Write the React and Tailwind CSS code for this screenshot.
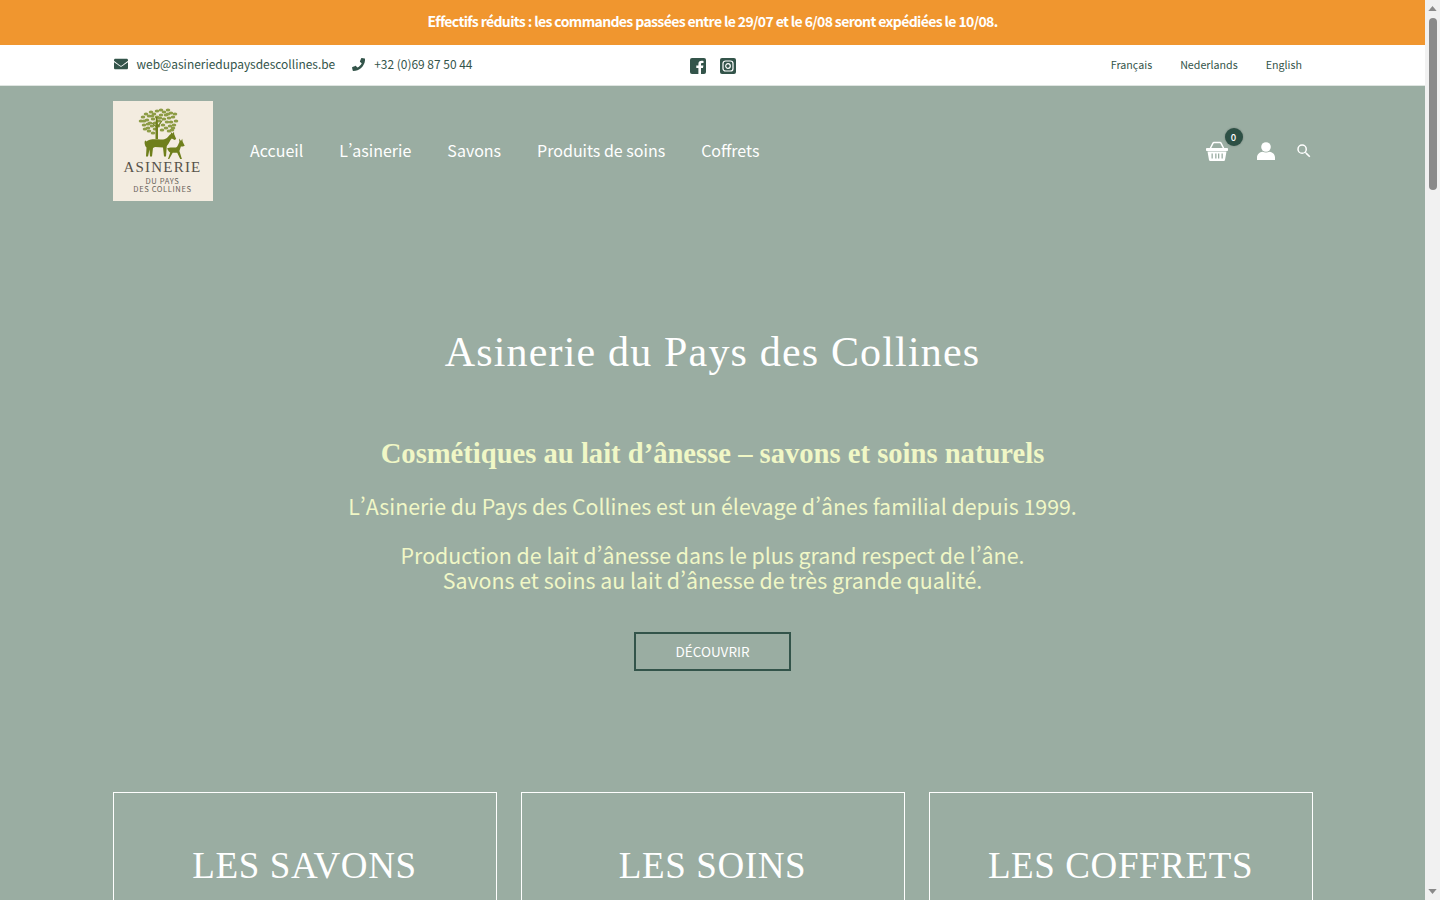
const sans = { fontFamily: '"Noto Sans CJK SC", "Noto Sans", sans-serif' };

const leaves = [
  [30,20],[32,16],[33,24],[35,13],[36,19],[37,27],[38,15],[39,22],[40,11],[41,25],[42,18],[43,13],[44,28],[44,22],[46,10],[46,16],[47,25],[48,20],
  [50,9],[50,14],[52,24],[53,11],[53,18],[55,27],[55,14],[56,21],[57,9],[58,17],[59,25],[60,12],[60,21],[61,29],[62,16],[63,24],[64,13],[65,20],[34,28],[38,30],[42,32],[58,30],[51,29],[33,20],[41,15],[49,17],[57,13],[62,27],[37,23]
];

function Logo() {
  return (
    <div className="w-[100px] h-[100px] bg-[#f3ece0] flex flex-col items-center shrink-0">
      <svg viewBox="0 0 100 60" className="w-[100px] h-[60px] block">
        <g fill="#8d9c45">
          {leaves.map(([x, y]) => (
            <ellipse key={`${x}-${y}`} cx={x - 2} cy={y} rx="2.300" ry="1.600" />
          ))}
        </g>
        <g fill="#6f7f1c">
          <path d="M43 16h1.500l.5 8 4-5 .7.6-4.700 7V38h-2.500V26l-4-4 .6-.6 3.400 3z" />
          <path d="M33.500 40.500c2-2.500 8-2.500 14-2 5 .4 7-1.800 9.500-5l1-.5-.2-2 1.800 1.600 1.400-1.800.2 2.400 2 4.800-1.600 1-2.800-1.500c-2 1.700-2.500 5-5 7.500l-.8 10.500h-2l-1-9-8-.5-2 1-1 8.500h-2l-.5-7-1.500 7h-2l.5-9c-2-2-2.500-6.500-1-7z" />
          <path d="M54 47.500c2-1.500 6-1 9-1 1.500-.6 2.500-3.500 3.400-5.500l-.4-3.500 2 2.500 1.200-2.300.5 3 2 4-1.800.7-2 .2-1.500 4.500 2.500 8h-1.700l-3-6.300-4.500 0-3.500 6.300H55l2.200-6.500c-1.500-1-2.700-3-3.200-4.600z" />
        </g>
      </svg>
      <div className="font-['Liberation_Serif',serif] text-[15px] leading-[15px] tracking-[1.200px] text-[#57524a] mt-[-1px]">ASINERIE</div>
      <div className="text-[7.600px] leading-[8px] tracking-[0.6px] text-[#68635a] text-center mt-[2px]" style={sans}>DU PAYS<br />DES COLLINES</div>
    </div>
  );
}

function Card({ title }) {
  return (
    <div className="border border-white border-b-0 h-[108px] flex justify-center pt-[51px]">
      <h2 className="font-['Liberation_Serif',serif] text-white text-[37px] leading-[44px] tracking-[0.6px]">{title}</h2>
    </div>
  );
}

export default function App() {
  return (
    <div className="h-[900px] overflow-hidden flex [font-feature-settings:'pwid']" style={sans}>
      <div className="w-[1425px] shrink-0 bg-[#9aada2] flex flex-col">
        <div className="h-[45px] bg-[#f0962f] flex items-center justify-center text-white text-[14px] font-semibold tracking-[-0.63px] pb-[3px]">
          Effectifs réduits : les commandes passées entre le 29/07 et le 6/08 seront expédiées le 10/08.
        </div>
        <div className="h-[41px] bg-white border-b border-[#dfe5e1] flex justify-center">
          <div className="w-[1200px] flex items-center justify-between text-[#33544a] relative">
            <div className="flex items-center text-[11.950px] leading-[16px] pb-[2px]">
              <svg viewBox="0 0 512 512" className="w-[14px] h-[14px] ml-px mr-[9px]" fill="#33544a"><path d="M502 191c4-3 10 0 10 5v204c0 26-22 48-48 48H48c-26 0-48-22-48-48V196c0-5 6-8 10-5 22 17 52 39 154 113 21 15 57 48 92 48 35 0 72-33 92-48 102-74 132-96 154-113zM256 320c23 0 57-29 73-41 133-97 143-105 174-129 6-5 9-11 9-19v-19c0-26-22-48-48-48H48C22 64 0 86 0 112v19c0 8 3 14 9 19 31 24 41 32 174 129 16 12 50 41 73 41z" /></svg>
              <span>web@asineriedupaysdescollines.be</span>
              <svg viewBox="0 0 512 512" className="w-[13px] h-[13px] ml-[17px] mr-[9px]" fill="#33544a"><path d="M493 24L389 0c-11-3-23 3-27 14l-48 112c-4 10-1 21 7 28l61 50c-36 76-98 139-175 175l-50-61c-7-8-18-11-28-7L17 359c-11 5-17 16-14 27l24 104c3 11 12 19 24 19 256 0 464-207 464-464 0-12-8-21-22-21z" /></svg>
              <span>+32 (0)69 87 50 44</span>
            </div>
            <div className="absolute left-[577px] top-[13px] flex gap-[14px]">
              <svg viewBox="0 0 16 16" className="w-4 h-4"><rect width="16" height="16" rx="2" fill="#33544a" /><path d="M11 16v-6h2l.4-2.400H11V6.200c0-.8.3-1.200 1.200-1.200h1.300V3c-.4-.1-1.100-.2-1.900-.2-2 0-3.200 1.200-3.200 3.200v1.600H6.300V10h2.100v6z" fill="#fff" /></svg>
              <svg viewBox="0 0 16 16" className="w-4 h-4"><rect width="16" height="16" rx="2" fill="#33544a" /><rect x="3" y="3" width="10" height="10" rx="2.600" fill="none" stroke="#fff" strokeWidth="1.200" /><circle cx="8" cy="8" r="2.300" fill="none" stroke="#fff" strokeWidth="1.200" /></svg>
            </div>
            <div className="flex text-[10.700px] gap-[28px] pr-[10.500px] pt-[1px]">
              <span>Français</span><span>Nederlands</span><span>English</span>
            </div>
          </div>
        </div>
        <div className="flex justify-center pt-[15px]">
          <div className="w-[1200px] h-[100px] flex items-center relative">
            <Logo />
            <nav className="flex gap-[36px] ml-[37.500px] text-[16px] leading-[24px] text-white pb-[2px]">
              <span>Accueil</span><span>L’asinerie</span><span>Savons</span><span>Produits de soins</span><span>Coffrets</span>
            </nav>
            <div className="ml-auto flex items-center text-white relative">
              <svg viewBox="0 0 22 20" className="w-[22px] h-[20px]">
                <path d="M4 8 7 2.200Q7.300 1.500 8 1.500h6q.7 0 1 .7L18 8" fill="none" stroke="#fff" strokeWidth="1.500" />
                <path d="M.8 7h20.400q.8 0 .8.8v1.400q0 .8-.8.8H.8q-.8 0-.8-.8V7.800Q0 7 .8 7z" fill="#fff" />
                <path fillRule="evenodd" d="M1.500 10.500h19L19 19q-.2 1-1.200 1H4.200q-1 0-1.200-1zM5.500 12.500v5h1.300v-5zm3.700 0v5h1.300v-5zm2.800 0v5h1.300v-5zm3.500 0v5h1.300v-5z" fill="#fff" />
              </svg>
              <div className="absolute left-[19px] top-[-13px] w-[18px] h-[18px] rounded-full bg-[#2d5045] text-white text-[9.500px] font-medium flex items-center justify-center shadow-[0_0_2px_rgba(0,0,0,0.3)]">0</div>
              <svg viewBox="0 0 18 18" className="w-[18px] h-[18px] ml-[29px]" fill="#fff"><circle cx="9" cy="5" r="4.800" /><path d="M0 18v-2.500C0 12 3 10 5.500 9.700c2 1 5 1 7 0C15 10 18 12 18 15.500V18z" /></svg>
              <svg viewBox="0 0 24 24" className="w-[18px] h-[18px] ml-[20px]" fill="#fff"><path d="M15.500 14h-.79l-.28-.27A6.470 6.470 0 0 0 16 9.500 6.500 6.500 0 1 0 9.500 16c1.610 0 3.090-.59 4.230-1.570l.27.28v.79l5 4.990L20.490 19zm-6 0A4.490 4.490 0 0 1 5 9.500 4.490 4.490 0 0 1 9.500 5 4.490 4.490 0 0 1 14 9.500 4.490 4.490 0 0 1 9.500 14z" /></svg>
            </div>
          </div>
        </div>
        <div className="flex flex-col items-center">
          <h1 className="font-['Liberation_Serif',serif] text-white text-[42px] leading-[50px] tracking-[1.170px] mt-[126px]">Asinerie du Pays des Collines</h1>
          <h3 className="font-['Liberation_Serif',serif] font-bold text-[#f0f7c6] text-[28.600px] leading-[34px] mt-[60px]">Cosmétiques au lait d’ânesse – savons et soins naturels</h3>
          <p className="text-[#f0f7c6] text-[21.350px] leading-[25px] mt-[22px]">L’Asinerie du Pays des Collines est un élevage d’ânes familial depuis 1999.</p>
          <p className="text-[#f0f7c6] text-[21.350px] leading-[25px] mt-[24px] text-center">Production de lait d’ânesse dans le plus grand respect de l’âne.<br />Savons et soins au lait d’ânesse de très grande qualité.</p>
          <div className="mt-[40px] w-[157px] h-[39px] border-2 border-[#33544a] flex items-center justify-center text-white text-[13.500px] pb-[1px]">DÉCOUVRIR</div>
        </div>
        <div className="flex justify-center mt-[121px]">
          <div className="w-[1200px] grid grid-cols-3 gap-[24px]">
            <Card title="LES SAVONS" /><Card title="LES SOINS" /><Card title="LES COFFRETS" />
          </div>
        </div>
      </div>
      <div className="w-[15px] bg-[#f1f1f1] flex flex-col items-center relative">
        <svg viewBox="0 0 10 6" className="w-[9px] h-[5px] mt-[6px]" fill="#8a8a8a"><path d="M5 0l5 6H0z" /></svg>
        <div className="w-[8px] h-[172px] rounded-full bg-[#8a8a8a] mt-[7px]" />
        <svg viewBox="0 0 10 6" className="w-[9px] h-[5px] absolute bottom-[6px]" fill="#8a8a8a"><path d="M5 6l5-6H0z" /></svg>
      </div>
    </div>
  );
}
